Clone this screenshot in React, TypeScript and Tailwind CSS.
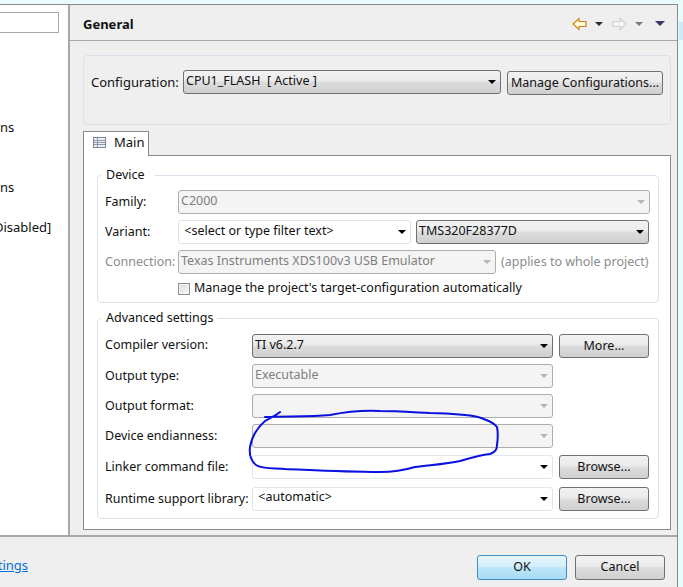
import React from "react";

function Arrow({ color = "border-t-black" }: { color?: string }) {
  return <span className={`block w-0 h-0 border-x-[4px] border-x-transparent border-t-[4px] ${color}`} />;
}

const btn = "bg-[linear-gradient(#f2f2f2_0%,#ebebeb_45%,#dddddd_50%,#cfcfcf_100%)] border border-[#707070] rounded-[3px]";

function Sel({ w, text, kind, h = "h-[24px]", tm = "-mt-[1px]" }: { w: string; text?: string; kind: "active" | "disabled" | "edit"; h?: string; tm?: string }) {
  const box =
    kind === "active" ? btn : kind === "disabled" ? "bg-[#f4f4f4] border border-[#adadad] rounded-[3px]" : "bg-white border border-[#dde5ee] rounded-[3px]";
  const tc = kind === "disabled" ? "text-[#7f7f7f]" : "text-[#111]";
  return (
    <div className={`${w} ${h} ${box} ${tc} shrink-0 flex items-center justify-between pl-[2px] pr-[4px] whitespace-pre`}>
      <span className={`leading-none ${tm}`}>{text}</span>
      <Arrow color={kind === "disabled" ? "border-t-[#b5b5b5]" : "border-t-black"} />
    </div>
  );
}

function Btn({ w, text, h = "h-[24px]" }: { w: string; text: string; h?: string }) {
  return <div className={`${w} ${h} ${btn} shrink-0 flex items-center justify-center text-[#111] whitespace-pre`}><span className="-mt-[1px]">{text}</span></div>;
}

function Group({ title, titleW, className, children }: { title: string; titleW: string; className: string; children: React.ReactNode }) {
  return (
    <div className={`relative border border-[#d8e2ec] rounded-[4px] ${className}`}>
      <span className={`absolute -top-[10px] left-[3px] ${titleW} bg-white px-[5px] leading-[18px] text-[#111] whitespace-pre`}>{title}</span>
      {children}
    </div>
  );
}

function Row({ label, labelW, dim, className, lm = "-mt-[1px]", children }: { label: string; labelW: string; dim?: boolean; className: string; lm?: string; children: React.ReactNode }) {
  return (
    <div className={`flex items-center ${className}`}>
      <span className={`${labelW} shrink-0 whitespace-pre ${lm} ${dim ? "text-[#8c8c8c]" : "text-[#111]"}`}>{label}</span>
      {children}
    </div>
  );
}

export default function App() {
  return (
    <div className="relative w-[683px] h-[587px] overflow-hidden bg-[#e9fbfb] text-[12.5px] leading-[18px] font-['Noto_Sans',sans-serif]">
      <div className="absolute left-[679px] top-[22px] w-[4px] h-[18px] bg-[#cdeafb]" />
      <div className="pt-[4px] w-[678px] h-full">
        <div className="h-full bg-[#efefef] border-t border-r border-[#8a8a8a] flex flex-col">
          <div className="h-[532px] flex border-b-2 border-[#a8a8a8] shrink-0">
            {/* Left tree */}
            <div className="w-[70px] shrink-0 bg-white border-r-2 border-[#a8a8a8] flex flex-col overflow-hidden">
              <div className="mt-[7px] w-[59px] h-[21px] border-y border-r border-[#a8a8a8]" />
              <div className="mt-[85px] text-[13px] text-[#111] leading-[18px]">ns</div>
              <div className="mt-[42px] text-[13px] text-[#111] leading-[18px]">ns</div>
              <div className="mt-[22px] -ml-[6px] text-[13px] text-[#111] whitespace-pre">Disabled]</div>
            </div>
            {/* Right page */}
            <div className="flex-1 flex flex-col min-w-0">
              <div className="h-[36px] shrink-0 border-b border-[#a8a8a8] flex items-center justify-between pl-[13px] pr-[12px]">
                <span className="font-bold text-[13px] text-[#111] mt-[2px]">General</span>
                <div className="flex items-center mt-[2px]">
                  <svg width="15" height="14" viewBox="0 0 15 14"><path d="M1 7 L7 1.5 V4.5 H14 V9.5 H7 V12.5 Z" fill="#fff6dc" stroke="#c98a12" strokeWidth="1.2" /></svg>
                  <span className="ml-[8px]"><Arrow color="border-t-[#2b2b2b]" /></span>
                  <svg className="ml-[9px]" width="15" height="14" viewBox="0 0 15 14"><path d="M14 7 L8 1.5 V4.5 H1 V9.5 H8 V12.5 Z" fill="#f4f4f2" stroke="#cfd2cd" strokeWidth="1.2" /></svg>
                  <span className="ml-[8px]"><Arrow color="border-t-[#7a7a7a]" /></span>
                  <span className="ml-[12px]"><span className="block w-0 h-0 border-x-[5px] border-x-transparent border-t-[5px] border-t-[#3b3769]" /></span>
                </div>
              </div>
              <div className="flex-1 pl-[13px] pr-[6px] pt-[14px] flex flex-col min-h-0">
                {/* Config */}
                <div className="h-[70px] shrink-0 border border-[#d8e2ec] rounded-[4px] flex items-start pl-[7px] pt-[14px]">
                  <span className="w-[92px] shrink-0 text-[13px] text-[#111] mt-[3px]">Configuration:</span>
                  <Sel w="w-[318px]" text="CPU1_FLASH  [ Active ]" kind="active" />
                  <div className="ml-[6px] mt-[1px]"><Btn w="w-[156px]" text="Manage Configurations..." /></div>
                </div>
                {/* Tab */}
                <div className="mt-[6px] flex shrink-0 h-[25px]">
                  <div className="w-[66px] h-[25px] bg-white border-t border-x border-[#8a8a8a] relative z-10 flex items-center pl-[9px]">
                    <svg className="-mt-[3px]" width="14" height="12" viewBox="0 0 14 12"><rect x="0.5" y="0.5" width="12" height="10" fill="#eef1f6" stroke="#7d8798" /><path d="M1 3.5H12M1 5.5H12M1 7.5H12M4.5 1V10" stroke="#8d97a8" strokeWidth="1" fill="none" /></svg>
                    <span className="ml-[7px] text-[13px] text-[#111] -mt-[4px]">Main</span>
                  </div>
                </div>
                <div className="-mt-px w-[588px] h-[375px] shrink-0 bg-white border border-[#8a8a8a] pl-[13px] pr-[11px] pt-[19px]">
                  <Group title="Device" titleW="w-[54px]" className="h-[128px] pl-[7px] pt-[14px]">
                    <Row label="Family:" labelW="w-[73px]" className="h-[24px]">
                      <Sel w="w-[472px]" text="C2000" kind="disabled" />
                    </Row>
                    <Row label="Variant:" labelW="w-[73px]" className="h-[24px] mt-[6px]">
                      <Sel w="w-[233px]" text=" <select or type filter text>" kind="edit" tm="-mt-[2px]" />
                      <div className="ml-[5px]"><Sel w="w-[233px]" text="TMS320F28377D" kind="active" /></div>
                    </Row>
                    <Row label="Connection:" labelW="w-[73px]" dim className="h-[24px] mt-[6px]">
                      <Sel w="w-[318px]" text="Texas Instruments XDS100v3 USB Emulator" kind="disabled" />
                      <span className="ml-[5px] whitespace-pre text-[#8c8c8c] -mt-[1px]">(applies to whole project)</span>
                    </Row>
                    <div className="flex items-center ml-[73px] mt-[8px] h-[14px]">
                      <span className="w-[12px] h-[12px] border border-[#8e8e8e] bg-[linear-gradient(135deg,#dcdcdc,#f7f7f7)] shadow-[inset_0_0_0_1px_#f4f4f4]" />
                      <span className="ml-[4px] whitespace-pre text-[#111] -mt-[3px]">Manage the project's target-configuration automatically</span>
                    </div>
                  </Group>
                  <Group title="Advanced settings" titleW="w-[116px]" className="mt-[15px] h-[201px] pl-[7px] pt-[15px]">
                    <Row label="Compiler version:" labelW="w-[147px]" lm="-mt-[2px]" className="h-[24px]">
                      <Sel w="w-[301px]" text="TI v6.2.7" kind="active" tm="-mt-[2px]" />
                      <div className="ml-[6px]"><Btn w="w-[90px]" text="More..." /></div>
                    </Row>
                    <Row label="Output type:" labelW="w-[147px]" className="h-[24px] mt-[6px]">
                      <Sel w="w-[301px]" text="Executable" kind="disabled" />
                    </Row>
                    <Row label="Output format:" labelW="w-[147px]" className="h-[24px] mt-[6px]">
                      <Sel w="w-[301px]" kind="disabled" />
                    </Row>
                    <Row label="Device endianness:" labelW="w-[147px]" className="h-[24px] mt-[6px]">
                      <Sel w="w-[301px]" kind="disabled" />
                    </Row>
                    <Row label="Linker command file:" labelW="w-[147px]" className="h-[24px] mt-[7px]">
                      <Sel w="w-[301px]" kind="edit" />
                      <div className="ml-[6px]"><Btn w="w-[90px]" text="Browse..." /></div>
                    </Row>
                    <Row label="Runtime support library:" labelW="w-[147px]" className="h-[24px] mt-[8px]">
                      <Sel w="w-[301px]" text=" <automatic>" kind="edit" tm="-mt-[3px]" />
                      <div className="ml-[6px]"><Btn w="w-[90px]" text="Browse..." /></div>
                    </Row>
                  </Group>
                </div>
              </div>
            </div>
          </div>
          {/* Footer */}
          <div className="flex-1 flex items-start justify-between pt-[18px] pr-[12px] overflow-hidden">
            <span className="mt-[1px] -ml-[7px] text-[13px] text-[#0a6fd6] underline whitespace-pre">ttings</span>
            <div className="flex">
              <div className="w-[90px] h-[25px] rounded-[3px] border border-[#3c8cc4] bg-[linear-gradient(#e6f6fe_0%,#d4effc_45%,#bde6fa_50%,#a9dcf6_100%)] flex items-center justify-center text-[#111]"><span className="-mt-[1px]">OK</span></div>
              <div className="ml-[8px]"><Btn w="w-[90px]" h="h-[25px]" text="Cancel" /></div>
            </div>
          </div>
        </div>
      </div>
      {/* Hand-drawn annotation */}
      <svg className="absolute left-0 top-0 pointer-events-none" width="683" height="587" viewBox="0 0 683 587" fill="none">
        <path
          d="M280 412 C274 417 270 418 265 421 C257 428 252 436 250 447 C249 455 251 461 256 465 C262 469 272 468 285 469 C310 470 340 472 380 472 C395 472 405 470 415 467 C430 465 447 464 460 461 C470 458 480 455 490 454 C495 452 497 450 497 445 C498 438 498 432 497 427 C493 422 487 420 478 417 C465 414 450 413.5 430 413 C410 412 395 411 380 411 C360 410 345 412 330 415 C310 417 285 416 265 417"
          stroke="#0a10e0"
          strokeWidth="2"
          strokeLinecap="round"
        />
      </svg>
    </div>
  );
}
